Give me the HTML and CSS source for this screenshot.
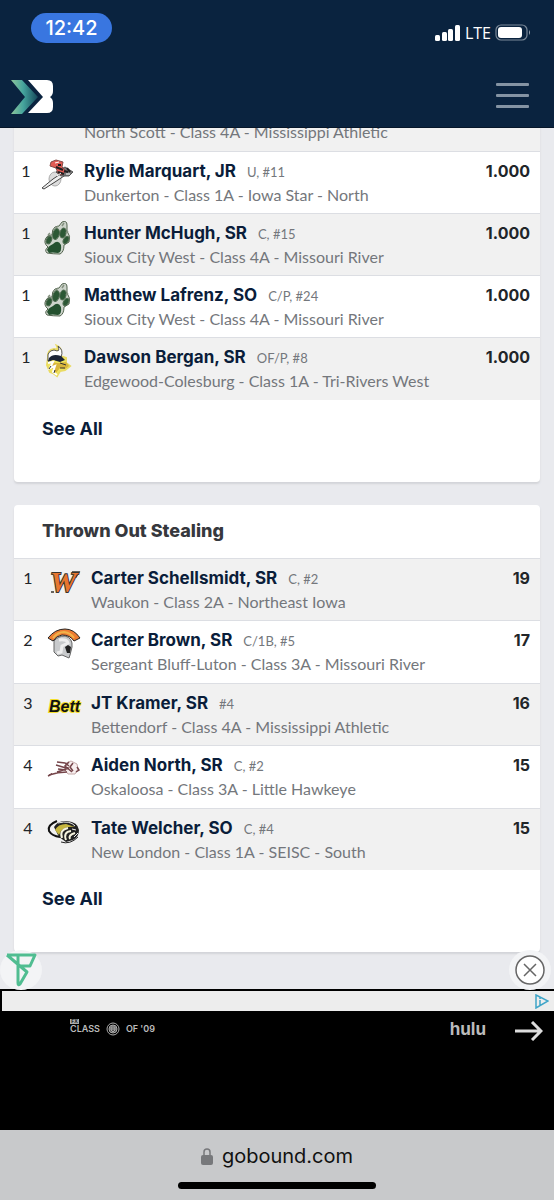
FILE: index.html
```
<!DOCTYPE html>
<html lang="en">
<head>
<meta charset="utf-8">
<meta name="viewport" content="width=device-width, initial-scale=1">
<title>Baseball leaders - Bound</title>
<link rel="stylesheet" href="styles.css">
</head>
<body>
<svg class="defs" aria-hidden="true">
  <symbol id="paw" viewBox="0 0 28 34">
    <path d="M3 32Q0 29 4 26Q-1 22 2 17Q4 13 8 14Q8 8 11 6L15 5L18 1Q23 -1 23 4L23 10Q27 15 25 21L20 24Q20 31 16 33Q9 33 3 32Z" fill="#cdd4cb" stroke="#53644f"/>
    <path d="M3 29Q4 25 9 23Q14 18 17 24Q18 31 14 32Q8 31 5 32Z" fill="#24512f"/>
    <g fill="#2c5835" stroke="#4d6a4f">
      <ellipse cx="5" cy="19" rx="2.5" ry="4" transform="rotate(25 5 19)"/>
      <ellipse cx="12" cy="13" rx="3.2" ry="5.5" transform="rotate(15 12 13)"/>
      <ellipse cx="19" cy="12" rx="3" ry="5" transform="rotate(15 19 12)"/>
      <ellipse cx="22" cy="19" rx="2.4" ry="4" transform="rotate(30 22 19)"/>
    </g>
    <path d="M4 14L6 12M12 7L14 5M18 5L20 2M22 12L24 10" fill="none" stroke="#84917f" stroke-width="1.5"/>
  </symbol>
</svg>

<header class="top">
  <div class="status">
    <span class="clock">12:42</span>
    <div class="signals">
      <svg width="26" height="17" viewBox="0 0 26 17" fill="#fff" aria-hidden="true"><rect x="0" y="10" width="5" height="6" rx="1.5"/><rect x="7" y="7" width="5" height="9" rx="1.5"/><rect x="13" y="4" width="5" height="12" rx="1.5"/><rect x="20" y="0" width="5" height="16" rx="1.5"/></svg>
      <span class="network">LTE</span>
      <svg width="36" height="18" viewBox="0 0 36 18" aria-hidden="true"><rect x="1" y="1" width="31" height="15" rx="5" fill="none" stroke="#7b8999" stroke-width="1.2"/><rect x="3" y="3" width="24" height="11" rx="3" fill="#fff"/><path d="M34 6Q36 8.500 34 11Z" fill="#9aa5b1"/></svg>
    </div>
  </div>
  <nav class="nav">
    <a class="brand" href="#" aria-label="Bound home">
      <svg width="43" height="34" viewBox="0 0 43 34" aria-hidden="true">
        <defs><linearGradient id="fade"><stop offset="0" stop-color="#8fc69b"/><stop offset=".45" stop-color="#45a49d"/><stop offset="1" stop-color="#15475a"/></linearGradient></defs>
        <path d="M0 0H11L27 17L11 34H0L14 17Z" fill="url(#fade)"/>
        <path d="M17 0H36Q42 0 42 6V11Q42 15 39 17Q42 19 42 23V27Q42 33 36 33H17L32 17Z" fill="#fff"/>
      </svg>
    </a>
    <button class="menu" type="button" aria-label="Open menu"><span></span><span></span><span></span></button>
  </nav>
</header>

<main class="page">
  <section class="card card-first">
    <table class="leaders">
      <tbody>
        <tr class="partial"><td></td><td></td><td colspan="2"><span class="school">North Scott - Class 4A - Mississippi Athletic</span></td></tr>
        <tr>
          <td class="rank">1</td>
          <td class="logo"><svg width="34" height="32" viewBox="0 0 34 32" aria-hidden="true"><ellipse cx="14" cy="20" rx="6" ry="7" fill="#ddd" stroke="#aaa"/><path d="M1 29L12 20L24 12L26 15L14 23L3 30Z" fill="#eee" stroke="#444"/><path d="M15 13L24 8L32 13L28 17L20 17Z" fill="#777" stroke="#555"/><path d="M10 3L15 1L22 3L21 8L25 12L21 16L17 14L15 9L9 7Z" fill="#e15b54" stroke="#854b48"/><path d="M15 8L22 11M17 13L23 15M26 9L29 13M23 12L27 13M20 6L17 6" stroke="#201e20" stroke-width="2"/><path d="M14 4L18 3M25 15L29 15M16 17L20 14" stroke="#fff"/></svg></td>
          <td class="player"><div class="name"><a href="#">Rylie Marquart, JR</a><span class="meta">U, #11</span></div><span class="school">Dunkerton - Class 1A - Iowa Star - North</span></td>
          <td class="value">1.000</td>
        </tr>
        <tr>
          <td class="rank">1</td>
          <td class="logo"><svg width="28" height="34" aria-hidden="true"><use href="#paw"/></svg></td>
          <td class="player"><div class="name"><a href="#">Hunter McHugh, SR</a><span class="meta">C, #15</span></div><span class="school">Sioux City West - Class 4A - Missouri River</span></td>
          <td class="value">1.000</td>
        </tr>
        <tr>
          <td class="rank">1</td>
          <td class="logo"><svg width="28" height="34" aria-hidden="true"><use href="#paw"/></svg></td>
          <td class="player"><div class="name"><a href="#">Matthew Lafrenz, SO</a><span class="meta">C/P, #24</span></div><span class="school">Sioux City West - Class 4A - Missouri River</span></td>
          <td class="value">1.000</td>
        </tr>
        <tr>
          <td class="rank">1</td>
          <td class="logo"><svg width="26" height="33" viewBox="0 0 26 33" aria-hidden="true"><path d="M3 13Q2 5 9 4Q14 5 12 1Q18 4 15 11L21 13L21 18L25 21L20 25L15 26L12 31L8 28L5 27L2 20Z" fill="#f2e85d" stroke="#eadb62" stroke-width="2"/><path d="M3 13Q2 6 9 5Q16 8 13 1Q19 5 16 12Q8 10 3 16Z" fill="#fff" stroke="#555"/><path d="M4 13Q8 8 16 11L20 15L15 17L8 15L3 17Z" fill="#1c2536"/><path d="M6 17L13 18L21 17L24 21L20 24L15 23L11 28L7 23Z" fill="#d9b63c"/><path d="M3 18L8 17L5 23L10 21L8 27L12 30" fill="none" stroke="#fff" stroke-width="2"/><path d="M15 18L21 20M15 23L20 23M6 21L4 24M10 25L9 28" stroke="#333"/></svg></td>
          <td class="player"><div class="name"><a href="#">Dawson Bergan, SR</a><span class="meta">OF/P, #8</span></div><span class="school">Edgewood-Colesburg - Class 1A - Tri-Rivers West</span></td>
          <td class="value">1.000</td>
        </tr>
      </tbody>
    </table>
    <div class="more"><a href="#">See All</a></div>
  </section>

  <section class="card">
    <h2>Thrown Out Stealing</h2>
    <table class="leaders wide">
      <tbody>
        <tr>
          <td class="rank">1</td>
          <td class="logo"><svg width="32" height="32" viewBox="0 0 32 32" aria-hidden="true"><path d="M3 26H6M24 6H31L28 11H26" fill="none" stroke="#38352e" stroke-width="1.500"/><text class="letter-w" x="2" y="26">W</text></svg></td>
          <td class="player"><div class="name"><a href="#">Carter Schellsmidt, SR</a><span class="meta">C, #2</span></div><span class="school">Waukon - Class 2A - Northeast Iowa</span></td>
          <td class="value">19</td>
        </tr>
        <tr>
          <td class="rank">2</td>
          <td class="logo"><svg width="32" height="32" viewBox="0 0 32 32" aria-hidden="true"><path d="M6 13Q10 8 17 8Q25 10 24 19L22 27L21 30L14 27L10 28L6 24Z" fill="#c8cacc" stroke="#666"/><path d="M0 10Q7 1 17 1Q26 1 32 10L26 13Q22 7 14 7Q8 8 5 13Z" fill="#ed7c32" stroke="#242424"/><path d="M5 10Q10 4 16 4Q23 5 26 10" fill="none" stroke="#f0b34a" stroke-width="2"/><path d="M17 19L20 17L23 19L22 25L19 25L18 22Z" fill="#222"/><path d="M11 12Q19 11 20 15L14 18L13 24L9 25" fill="none" stroke="#eee" stroke-width="3"/></svg></td>
          <td class="player"><div class="name"><a href="#">Carter Brown, SR</a><span class="meta">C/1B, #5</span></div><span class="school">Sergeant Bluff-Luton - Class 3A - Missouri River</span></td>
          <td class="value">17</td>
        </tr>
        <tr>
          <td class="rank">3</td>
          <td class="logo"><svg width="32" height="32" viewBox="0 0 32 32" aria-hidden="true"><text class="letter-bett" x="1" y="21">Bett</text></svg></td>
          <td class="player"><div class="name"><a href="#">JT Kramer, SR</a><span class="meta">#4</span></div><span class="school">Bettendorf - Class 4A - Mississippi Athletic</span></td>
          <td class="value">16</td>
        </tr>
        <tr>
          <td class="rank">4</td>
          <td class="logo"><svg width="32" height="32" viewBox="0 0 32 32" aria-hidden="true"><path d="M18 10L23 8L29 11L30 16L27 21L20 21L17 17Z" fill="#f7eeee" stroke="#c5aaaa"/><path d="M1 22Q10 19 19 19M4 21L0 23M9 9L17 10L21 13M8 12L18 15M10 16L18 17M9 19L21 15M21 9L17 13L24 19M25 10L22 14L25 18M29 14L31 17L28 19" fill="none" stroke="#75454a" stroke-width="1.500"/></svg></td>
          <td class="player"><div class="name"><a href="#">Aiden North, SR</a><span class="meta">C, #2</span></div><span class="school">Oskaloosa - Class 3A - Little Hawkeye</span></td>
          <td class="value">15</td>
        </tr>
        <tr>
          <td class="rank">4</td>
          <td class="logo"><svg width="32" height="32" viewBox="0 0 32 32" aria-hidden="true"><path d="M9 5Q-1 9 1 15Q4 20 12 21" fill="none" stroke="#111" stroke-width="2"/><path d="M6 11Q10 4 19 5Q30 6 31 14Q31 21 25 24L18 26L11 21Z" fill="#222"/><path d="M7 14Q10 8 18 8L27 11Q18 10 13 15L11 19Z" fill="#c6b640"/><path d="M14 22Q11 14 20 12M18 24Q15 16 23 15M22 23Q20 19 27 17" fill="none" stroke="#f6f4df" stroke-width="2"/><path d="M10 7Q22 4 27 10M24 13L28 14M26 21L30 17" fill="none" stroke="#eee"/><path d="M13 26Q22 29 30 21" fill="none" stroke="#222"/></svg></td>
          <td class="player"><div class="name"><a href="#">Tate Welcher, SO</a><span class="meta">C, #4</span></div><span class="school">New London - Class 1A - SEISC - South</span></td>
          <td class="value">15</td>
        </tr>
      </tbody>
    </table>
    <div class="more"><a href="#">See All</a></div>
  </section>
</main>

<aside class="ad" aria-label="Advertisement">
  <a class="ad-provider" href="#" aria-label="Ad provider"><svg width="32" height="34" viewBox="0 0 32 34" fill="none" stroke="#50bd91" stroke-width="3" stroke-linejoin="round" aria-hidden="true"><path d="M2 2H30L25 13H14M2 2L22 19L15 31Q13 33 13 30V3"/></svg></a>
  <button class="ad-close" type="button" aria-label="Close ad"><svg width="30" height="30" viewBox="0 0 30 30" fill="none" stroke="#666" stroke-width="1.500" aria-hidden="true"><circle cx="15" cy="15" r="14"/><path d="M9 9L21 21M21 9L9 21"/></svg></button>
  <div class="ad-strip"><svg width="14" height="15" viewBox="0 0 14 15" fill="none" stroke="#3fa5c8" stroke-width="1.500" aria-hidden="true"><path d="M1 1L13 7L1 14ZM5 6V11M5 3V5"/></svg></div>
  <a class="ad-body" href="#">
    <span class="show"><small>FX</small><span class="show-title">CLASS <svg width="14" height="14" viewBox="0 0 14 14" fill="none" stroke="#aaa" aria-hidden="true"><circle cx="7" cy="7" r="6"/><circle cx="7" cy="7" r="4" fill="#555"/><path d="M5 5H9V8L7 10L5 8ZM5 7H9"/></svg> OF '09</span></span>
    <span class="service">hulu</span>
    <svg width="28" height="20" viewBox="0 0 28 20" fill="none" stroke="#ddd" stroke-width="3" aria-hidden="true"><path d="M0 10H26M17 1L26 10L17 19"/></svg>
  </a>
</aside>

<footer class="browser">
  <div class="address"><svg width="12" height="17" viewBox="0 0 12 17" aria-hidden="true"><path d="M3 8V4Q3 1 6 1T9 4V8" fill="none" stroke="#77787b" stroke-width="1.500"/><rect y="7" width="12" height="10" rx="2" fill="#77787b"/></svg><span>gobound.com</span></div>
  <div class="home-bar"></div>
</footer>
</body>
</html>
```
FILE: styles.css
```
* { box-sizing: border-box; }
body {
  margin: 0;
  min-height: 100vh;
  display: flex;
  flex-direction: column;
  background: #e9eaee;
  font-family: Inter, "Liberation Sans", sans-serif;
  color: #212529;
}
a { color: inherit; text-decoration: none; }
button { border: 0; padding: 0; background: none; }
svg { display: block; flex: none; }
.defs { position: absolute; width: 0; height: 0; }

.top {
  position: relative;
  z-index: 1;
  height: 128px;
  background: #0a233f;
  border-bottom: 1px solid #061629;
}
.status {
  display: flex;
  justify-content: space-between;
  padding: 13px 23px 0 31px;
}
.clock {
  width: 81px;
  height: 30px;
  border-radius: 15px;
  background: #3976e0;
  color: #fff;
  font-size: 20px;
  font-weight: 500;
  line-height: 30px;
  text-align: center;
}
.signals { display: flex; align-items: center; gap: 4px; padding-top: 10px; }
.network { color: #fff; font-family: "Open Sans", sans-serif; font-size: 16px; font-weight: 500; line-height: 20px; }
.nav {
  display: flex;
  justify-content: space-between;
  align-items: center;
  height: 34px;
  margin-top: 37px;
  padding: 0 25px 0 11px;
}
.menu { display: flex; flex-direction: column; gap: 8px; width: 33px; padding-bottom: 3px; }
.menu span { height: 3px; border-radius: 1px; background: #8493a3; }

.page { flex: 1; padding: 0 14px 36px; }
.card {
  margin-bottom: 23px;
  background: #fff;
  border-radius: 4px;
  box-shadow: 0 2px 2px #d3d4d8;
}
.card:last-child { margin-bottom: 0; }
.card-first { margin-top: -39px; }
.card h2 {
  margin: 0;
  padding: 14px 28px 15px;
  font-size: 18px;
  font-weight: 800;
  line-height: 24px;
  color: #36383d;
}
.leaders { width: 100%; border-collapse: collapse; }
.leaders tr { height: 62px; border-top: 1px solid #dcdee3; }
.wide tr:nth-child(even) { height: 63px; }
.leaders td { padding: 7px 0 5px; vertical-align: top; line-height: 24px; }
.leaders .partial td { padding-bottom: 7px; vertical-align: bottom; }
.leaders tr:nth-child(odd) { background: #f1f1f1; }
.rank { width: 24px; text-align: center; font-family: Lato, sans-serif; font-size: 16px; }
.wide .rank { width: 28px; }
.leaders .logo { width: 46px; padding-right: 6px; }
.wide .logo { width: 49px; }
.logo svg { margin: 0 auto; overflow: visible; }
.player { white-space: nowrap; }
.name { display: flex; align-items: baseline; gap: 11px; height: 24px; }
.name a { color: #0a1d3a; font-size: 17px; font-weight: 700; }
.meta { color: #74777c; font-family: Lato, sans-serif; font-size: 13px; }
.school { display: block; color: #74777c; font-family: Lato, sans-serif; font-size: 16px; line-height: 24px; }
.leaders .value { padding-right: 10px; text-align: right; font-size: 16px; font-weight: 700; }
.more { padding: 17px 28px 41px; color: #0a1d3a; font-size: 18px; font-weight: 700; line-height: 24px; }
.letter-w { fill: #e8762e; stroke: #38352e; stroke-width: 2px; paint-order: stroke; font: italic 700 30px "Liberation Serif", serif; }
.letter-bett { fill: #111; stroke: #f4df2a; stroke-width: 2px; paint-order: stroke; font: italic 700 16px "Liberation Sans", sans-serif; }

.ad { position: relative; background: #000; }
.ad-provider, .ad-close {
  position: absolute;
  top: -39px;
  display: grid;
  place-items: center;
  width: 42px;
  height: 40px;
  border-radius: 50%;
  background: #f3f4f6;
}
.ad-provider { left: 0; }
.ad-close { right: 3px; cursor: pointer; }
.ad-close circle { fill: #fff; }
.ad-strip {
  display: flex;
  justify-content: flex-end;
  align-items: center;
  height: 22px;
  padding-right: 5px;
  border-top: 2px solid #000;
  border-left: 2px solid #000;
  background: #ededed;
}
.ad-body { display: flex; align-items: flex-start; height: 119px; padding: 8px 11px 0 70px; color: #bbb; }
.show { flex: 1; font-size: 9px; font-weight: 600; }
.show small { display: block; width: 9px; background: #aaa; color: #000; font-size: 5px; line-height: 5px; text-align: center; }
.show-title { display: flex; align-items: center; gap: 6px; height: 9px; }
.service { margin-right: 29px; font-size: 17px; font-weight: 700; line-height: 20px; }
.ad-body > svg { margin-top: 2px; }

.browser { height: 70px; padding-top: 12px; background: #c8c9cb; color: #111; }
.address { display: flex; justify-content: center; align-items: center; gap: 9px; font-size: 20px; line-height: 28px; }
.home-bar { width: 198px; height: 7px; margin: 12px auto 0; border-radius: 4px; background: #000; }
```
